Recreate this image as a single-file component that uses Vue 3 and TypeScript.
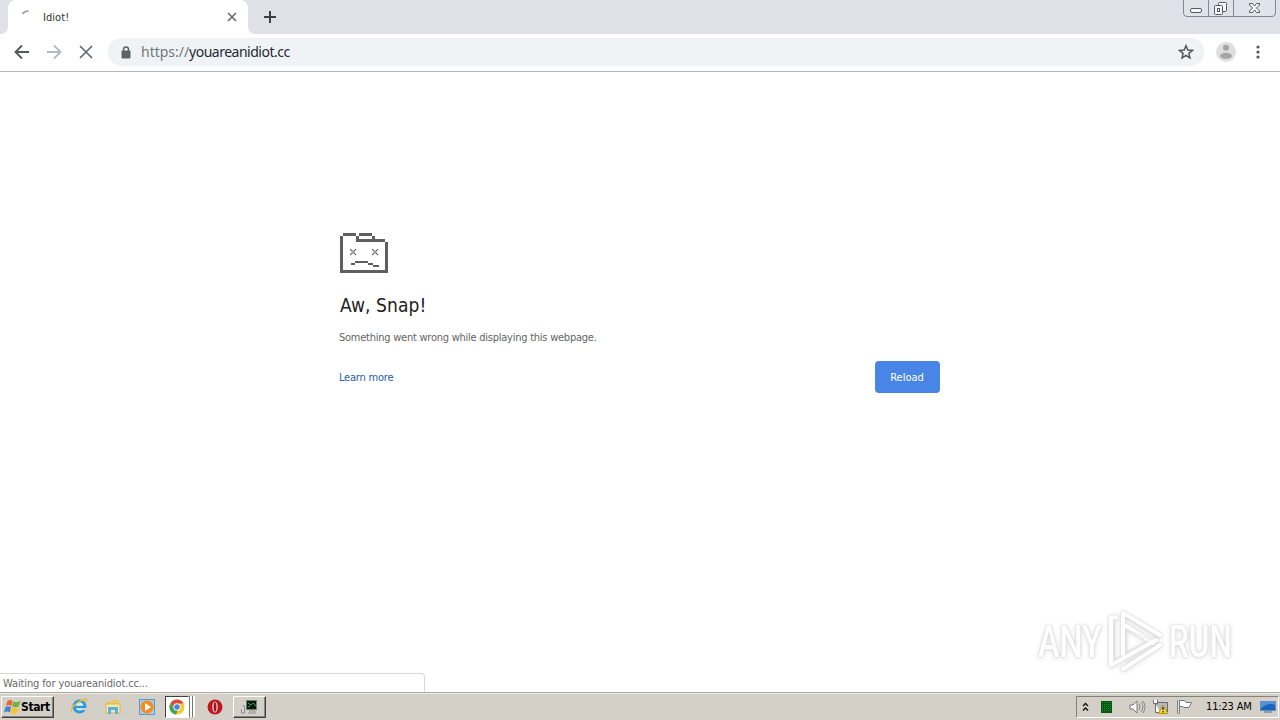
<script setup lang="ts">
import { ref } from 'vue'

const tabTitle = ref('Idiot!')
const host = ref('youareanidiot.cc')
const clock = ref('11:23 AM')
const eyeCells: number[][] = [
  [0, 0], [4, 0], [1, 1], [3, 1], [2, 2], [1, 3], [3, 3], [0, 4], [4, 4],
]
</script>

<template>
  <div class="screen">
    <header class="tabs">
      <div class="tab">
        <svg class="spinner" width="16" height="16" viewBox="0 0 16 16"><path d="M2.5 5 Q4.5 2 8.5 2.2" fill="none" stroke="#a2a4a7" stroke-width="1.8" /></svg>
        <span class="title">{{ tabTitle }}</span>
        <svg class="close" width="10" height="10" viewBox="0 0 10 10"><path d="M1 1L9 9M9 1L1 9" stroke="#6a6d70" stroke-width="1.7" /></svg>
        <svg class="flare" width="8" height="8" viewBox="0 0 8 8"><path d="M0 0Q0 8 8 8H0Z" fill="#fff" /></svg>
        <svg class="flare left" width="8" height="8" viewBox="0 0 8 8"><path d="M8 0Q8 8 0 8H8Z" fill="#fff" /></svg>
      </div>
      <svg class="plus" width="12" height="12" viewBox="0 0 12 12"><path d="M6 0V12M0 6H12" stroke="#3c4043" stroke-width="2" /></svg>
      <div class="winctl">
        <svg width="97" height="17" viewBox="0 0 97 17">
          <path d="M.5 0V13Q.5 16.500 4 16.500H89Q92.500 16.500 92.500 13V0" fill="#dfe3ea" stroke="#828894" />
          <path d="M25.500 0V16M50.500 0V16" stroke="#828894" />
          <g fill="#f5f6f8" stroke="#555b67">
            <rect x="7.500" y="8.500" width="11" height="4" rx="1.500" />
            <rect x="35.500" y="2.500" width="8" height="9" rx="1" />
            <rect x="31.500" y="5.500" width="8" height="9" rx="1" />
            <rect x="34.500" y="8.500" width="2" height="3" />
            <path d="M66.500 3.500H69.500L71.500 6L73.500 3.500H76.500V5L73.500 8L76.500 11V12.500H73.500L71.500 10L69.500 12.500H66.500V11L69.500 8L66.500 5Z" />
          </g>
        </svg>
      </div>
    </header>

    <nav class="toolbar">
      <svg class="back" width="16" height="16" viewBox="0 0 16 16"><path d="M15 8H2M8 1.500L1.500 8L8 14.500" fill="none" stroke="#55585c" stroke-width="1.900" /></svg>
      <svg class="forward" width="16" height="16" viewBox="0 0 16 16"><path d="M1 8H14M8 1.500L14.500 8L8 14.500" fill="none" stroke="#b7b9bc" stroke-width="1.900" /></svg>
      <svg class="stop" width="14" height="14" viewBox="0 0 14 14"><path d="M1 1L13 13M13 1L1 13" stroke="#66696c" stroke-width="1.700" /></svg>
      <div class="omnibox">
        <svg class="lock" width="10" height="13" viewBox="0 0 10 13"><path d="M2.500 5V3.500Q2.500 1 5 1T7.500 3.500V5" fill="none" stroke="#5f6368" stroke-width="1.500" /><rect x="0.500" y="4.500" width="9" height="8" rx="1" fill="#5f6368" /></svg>
        <span class="url"><span class="scheme">https://</span>{{ host }}</span>
        <svg class="star" width="16" height="16" viewBox="0 0 16 16"><path d="M8 1.700L9.800 6L14.500 6.400L10.900 9.400L12 14L8 11.500L4 14L5.100 9.400L1.500 6.400L6.200 6Z" fill="none" stroke="#55585c" stroke-width="1.500" /></svg>
      </div>
      <svg class="avatar" width="20" height="20" viewBox="0 0 20 20"><circle cx="10" cy="10" r="10" fill="#dededf" /><circle cx="10" cy="5.800" r="3" fill="#a4a5a7" /><ellipse cx="10" cy="13.800" rx="6" ry="3" fill="#a4a5a7" /></svg>
      <svg class="dots" width="4" height="14" viewBox="0 0 4 14" fill="#55585c"><circle cx="2" cy="2" r="1.600" /><circle cx="2" cy="7" r="1.600" /><circle cx="2" cy="12" r="1.600" /></svg>
    </nav>

    <main class="page">
      <section class="crash">
        <svg class="sad" width="48" height="40" viewBox="0 0 48 40" fill="#5f5f5f" shape-rendering="crispEdges">
          <path d="M3 0H16V3H3ZM0 3H3V40H0ZM16 3H19V9H16ZM19 0H32V3H19ZM32 3H35V6H32ZM19 6H45V9H19ZM45 9H48V40H45ZM3 37H45V40H3Z" />
          <g v-for="x in [10, 32]" :key="x" shape-rendering="auto"><rect v-for="(c, i) in eyeCells" :key="i" :x="x + c[0] * 1.2" :y="16 + c[1] * 1.2" width="1.4" height="1.4" /></g>
          <path d="M11 30H15V32H11ZM15 28H28V30H15ZM28 30H33V32H28ZM33 32H39V34H33Z" />
        </svg>
        <h1><span>Aw, Snap!</span></h1>
        <p><span>Something went wrong while displaying this webpage.</span></p>
        <div class="actions"><a>Learn more</a><button>Reload</button></div>
      </section>
      <div class="brand">
        <span class="word any">ANY</span>
        <svg width="60" height="64" viewBox="0 0 60 64">
          <g fill="none" stroke="#fff" stroke-width="4" stroke-linejoin="round" stroke-linecap="round">
            <path d="M9 7.500H4V55L49 30" />
            <path d="M16 14L46 33" />
            <path d="M16 44V3L53 25" />
            <path d="M16 59L53 35" />
          </g>
          <path d="M7 10V51L14 47M19 19V43L43 30ZM19 7L51 27M18 55L49 35" fill="none" stroke="#e7e7e7" />
        </svg>
        <span class="word run">RUN</span>
      </div>
      <div class="status"><span>Waiting for youareanidiot.cc...</span></div>
    </main>

    <footer class="taskbar">
      <div class="start">
        <svg width="17" height="16" viewBox="0 0 17 16"><path d="M3.500 2Q6.500 0 8.500 2L7.500 7Q4.500 5 1.800 7Z" fill="#ed6335" /><path d="M9.300 2.500Q12 4 16.500 2L14.800 7.500Q11 9 8.200 7.200Z" fill="#70b33e" /><path d="M1.500 8Q4.500 6.500 7 8L5.800 13.500Q3 11.500 0 13.500Z" fill="#3f86d2" /><path d="M7.800 8.500Q11 10 14.500 8.500L13 14Q9 16 6.500 13.500Z" fill="#f9c332" /></svg>
        <b>Start</b>
      </div>
      <svg class="ie" width="17" height="17" viewBox="0 0 17 17"><circle cx="8.500" cy="8.500" r="5.500" fill="#d8f2fc" stroke="#2d9bd9" stroke-width="3" /><path d="M4 9H14" stroke="#2d9bd9" stroke-width="2.500" /><path d="M1 14Q-2 10 8 4T15 4" fill="none" stroke="#e6b93f" stroke-width="1.500" /><path d="M11 11H16" stroke="#d4d0c8" stroke-width="2" /></svg>
      <svg class="folder" width="16" height="16" viewBox="0 0 16 16"><path d="M1 3H6L7 1H14V6H1Z" fill="#e9c85c" /><path d="M1 5H15V14H1Z" fill="#f9e9a2" stroke="#d8b64e" /><path d="M3 8H13V15H10V11H6V15H3Z" fill="#55b4df" /></svg>
      <svg class="media" width="16" height="16" viewBox="0 0 16 16"><rect x=".5" y=".5" width="15" height="15" fill="#a9cce6" stroke="#5b9bc9" /><circle cx="8" cy="8" r="6.500" fill="#f28c1c" /><path d="M6 4L12 8L6 12Z" fill="#fff" /></svg>
      <div class="chrome">
        <svg width="16" height="16" viewBox="0 0 16 16"><circle cx="8" cy="8" r="7.500" fill="#fbc72e" /><path d="M1.500 4.200A7.500 7.500 0 0 1 14.500 4.200L8 5L6 10Z" fill="#df4937" /><path d="M1.500 4.200L5.500 10L9 11L7 15.500A7.500 7.500 0 0 1 1.500 4.200Z" fill="#3ba457" /><circle cx="8" cy="8" r="3.700" fill="#fff" /><circle cx="8" cy="8" r="2.800" fill="#4a88df" /></svg>
      </div>
      <div class="stack"></div>
      <div class="stack"></div>
      <svg class="opera" width="16" height="16" viewBox="0 0 16 16"><circle cx="8" cy="8" r="7.500" fill="#bd1722" /><ellipse cx="8" cy="8" rx="2.700" ry="5.500" fill="#eadbd7" /><ellipse cx="8" cy="8" rx="1.400" ry="4.800" fill="#a5131c" /></svg>
      <div class="app">
        <svg width="17" height="16" viewBox="0 0 17 16"><rect x="5.500" y="1.500" width="10" height="9" fill="#07190d" stroke="#737c77" /><path d="M7 4L10 6L12 4L15 7M7 8L9 7" stroke="#37a65c" fill="none" /><path d="M8 12H14V14H7" stroke="#888" fill="#ddd" /><path d="M1.500 7H3.500V14H.5V10" stroke="#85888a" fill="#ddd" /></svg>
      </div>
      <div class="tray">
        <svg class="chev" width="7" height="10" viewBox="0 0 7 10"><path d="M1 4L3.500 1.500L6 4M1 8.500L3.500 6L6 8.500" fill="none" stroke="#111" stroke-width="1.400" /></svg>
        <svg class="grid" width="11" height="12" viewBox="0 0 11 12"><rect width="11" height="12" fill="#075411" /><path d="M1 1.500H11M1 3.500H11M1 5.500H11M1 7.500H11M1 9.500H11" stroke="#169129" stroke-dasharray="1 1" /></svg>
        <svg class="sound" width="17" height="14" viewBox="0 0 17 14"><path d="M1 5H4L8 1V13L4 9H1Z" fill="#fff" stroke="#777" /><path d="M10 4Q12 7 10 10M12 2Q16 7 12 12M14 1Q18 7 14 13" fill="none" stroke="#888" /></svg>
        <svg class="network" width="17" height="17" viewBox="0 0 17 17"><rect x="4.500" y="4.500" width="11" height="9" fill="#b5b8be" stroke="#686b70" /><path d="M1.500 2V5.500H5.500V2M3.500 5V14.500H8" fill="#fff" stroke="#6b6b6b" /><path d="M11 7L15.500 15.500H6.500Z" fill="#ffdc32" stroke="#b79717" /><path d="M11 9V12M11 13V14.500" stroke="#222" stroke-width="1.300" /></svg>
        <svg class="flag" width="17" height="15" viewBox="0 0 17 15"><path d="M2.500 1V14.500" stroke="#666" stroke-width="2.500" /><path d="M2.500 1V14" stroke="#fff" stroke-width=".8" /><path d="M3.500 1.500H8.500L10 3.500H15.500L13 8.500H8L6.500 7.500H3.500Z" fill="#fff" stroke="#777" /></svg>
        <span class="clock">{{ clock }}</span>
        <svg class="desktop" width="16" height="13" viewBox="0 0 16 13"><rect x=".5" y="1.500" width="15" height="9" fill="#1d63bd" stroke="#6b8fbd" /><path d="M1 8Q9 2 15 5V2H1Z" fill="#4f94dc" /><path d="M4 12H12" stroke="#436a9d" stroke-width="1" /></svg>
      </div>
    </footer>
  </div>
</template>

<style>
html, body { margin: 0; overflow: hidden; }
</style>

<style scoped>
* { box-sizing: border-box; }
.screen { width: 1280px; height: 720px; display: flex; flex-direction: column; background: #fff; font: 11px/14px "DejaVu Sans Condensed", "DejaVu Sans", sans-serif; font-stretch: condensed; color: #333; overflow: hidden; }
svg { display: block; flex: none; }
span, a { white-space: nowrap; }
.tabs { height: 34px; flex: none; display: flex; align-items: flex-start; background: #dee1e8; }
.tab { position: relative; width: 240px; height: 34px; margin-left: 8px; border-radius: 8px 8px 0 0; background: #fff; display: flex; align-items: center; padding-left: 12px; }
.title { margin-left: 7px; padding-top: 2px; letter-spacing: .05px; }
.close { margin-left: auto; margin-right: 11px; }
.flare { position: absolute; left: 100%; bottom: 0; }
.flare.left { left: -8px; }
.plus { margin: 11px 0 0 16px; }
.winctl { margin-left: auto; }
.toolbar { height: 38px; flex: none; border-bottom: 1px solid #b5b7b5; display: flex; align-items: center; padding: 0 0 1px 14px; }
.forward { margin-left: 16px; }
.stop { margin-left: 17px; }
.omnibox { width: 1096px; height: 28px; margin-left: 15px; border-radius: 14px; background: #f0f3f6; display: flex; align-items: center; padding: 0 10px 0 13px; }
.url { margin-left: 10px; font: 14px/20px "Noto Sans", sans-serif; color: #252a30; letter-spacing: -.34px; }
.scheme { color: #72777c; letter-spacing: -.02px; }
.url { letter-spacing: -.5px; }
.star { margin-left: auto; }
.avatar { margin-left: 12px; }
.dots { margin-left: 20px; }
.page { position: relative; flex: 1; min-height: 0; }
.crash { width: 600px; margin: 161px auto 0; }
h1 { margin: 20px 0 0; font-weight: 400; font-size: 19px; line-height: 25px; color: #202124; letter-spacing: .08px; }
p { margin: 13px 0 0 -1px; color: #646464; line-height: 14px; letter-spacing: -.245px; }
.actions { display: flex; align-items: center; justify-content: space-between; margin-top: 16px; }
.actions a { color: #2460ad; margin-left: -1px; padding-top: 2px; letter-spacing: -.2px; }
button { width: 65px; height: 32px; border: 0; padding: 1px 1px 0 0; border-radius: 4px; background: #4885e7; color: #fff; font: inherit; }
.brand { position: absolute; right: 44px; bottom: 18px; height: 64px; display: flex; align-items: center; gap: 4px; filter: drop-shadow(0 0 1px #d0d0d0) drop-shadow(0 1px 2px #e2e2e2); }
.word { width: 65px; font: 500 45px/60px Roboto, sans-serif; color: #fff; transform-origin: left; transform: scaleX(.72); }
.run { transform: translateX(-2px) scaleX(.7); }
.status { position: absolute; left: 0; bottom: 0; width: 425px; height: 19px; border: 1px solid #d9d9d9; border-left: 0; border-bottom: 0; border-radius: 0 4px 0 0; padding-left: 3px; color: #686868; line-height: 19px; letter-spacing: -.12px; background: #fff; }
.taskbar { height: 28px; flex: none; display: flex; align-items: center; background: #d4d0c8; border-top: 1px solid #aaa9a4; box-shadow: inset 0 1px #eeece7; color: #000; }
.start { width: 53px; height: 22px; margin-left: 1px; border: 1px solid; border-color: #fff #404040 #404040 #fff; box-shadow: inset -1px -1px #88857f; display: flex; align-items: center; padding-left: 2px; }
.start b { font-size: 12px; letter-spacing: -.4px; }
.ie { margin-left: 17px; }
.folder { margin-left: 17px; }
.media { margin-left: 18px; }
.chrome { width: 24px; height: 22px; margin-left: 10px; padding: 2px 3px; background: #fff; border: 1px solid; border-color: #404040 #fff #fff #404040; }
.stack { width: 3px; height: 21px; background: #fff; border-left: 1px solid #77746f; }
.opera { margin-left: 12px; }
.app { width: 33px; height: 22px; margin-left: 10px; border: 1px solid; border-color: #fff #404040 #404040 #fff; box-shadow: inset -1px -1px #88857f; display: flex; align-items: center; justify-content: center; }
.tray { width: 203px; height: 22px; margin-left: auto; margin-right: 1px; border: 1px solid; border-color: #84817b #fff #fff #84817b; display: flex; align-items: center; padding-left: 5px; }
.grid { margin-left: 12px; }
.sound { margin-left: 17px; }
.network { margin-left: 6px; }
.flag { margin-left: 7px; }
.clock { margin-left: 13px; padding-top: 1px; letter-spacing: -.15px; }
.desktop { margin-left: auto; margin-right: 2px; }
</style>
